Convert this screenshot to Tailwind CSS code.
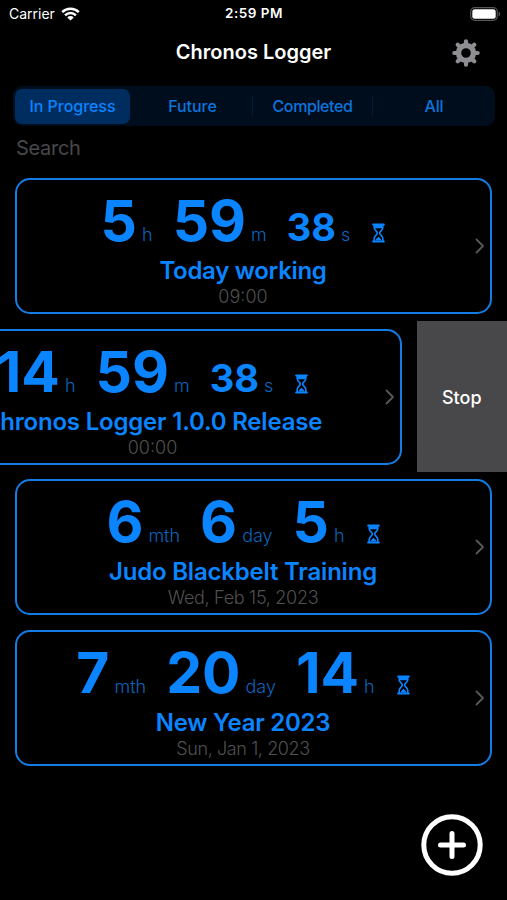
<!DOCTYPE html>
<html lang="en">
<head>
    <meta charset="UTF-8" />
    <meta name="viewport" content="width=device-width, initial-scale=1.0" />
    <script src="https://cdn.jsdelivr.net/npm/@tailwindcss/browser@4"></script>
    <title>Chronos Logger</title>
</head>
<body class="bg-black text-white font-['Inter',sans-serif]">
    <svg class="hidden">
        <symbol id="hourglass" viewBox="0 0 13 20">
            <path d="M1.200 1.500h10.600M1.200 18.500h10.600" stroke="currentColor" stroke-width="2.200" stroke-linecap="round" />
            <path d="M2.200 2v2.800c0 2.400 3.200 3.600 3.200 5.200s-3.200 2.800-3.200 5.200V18M10.800 2v2.800c0 2.400-3.200 3.600-3.200 5.200s3.200 2.800 3.200 5.200V18" fill="none" stroke="currentColor" stroke-width="1.600" />
            <path d="M2.200 2h8.600v3.200H2.200zM3.600 17.400c.3-1.600 1.600-2.200 2.900-3.600 1.300 1.400 2.600 2 2.900 3.600z" fill="currentColor" />
        </symbol>
        <symbol id="chevron" viewBox="0 0 10 16">
            <path d="M1.500 1.500L8 8l-6.500 6.500" fill="none" stroke="currentColor" stroke-width="1.800" stroke-linecap="round" stroke-linejoin="round" />
        </symbol>
    </svg>

    <div class="relative h-[900px] w-[507px] overflow-hidden">
        <!-- Status bar -->
        <div class="grid h-[27px] grid-cols-3 items-center pl-[9px] pr-[6px] text-[13.500px] leading-none">
            <div class="flex items-center gap-[6px] text-[14px]">
                <span>Carrier</span>
                <svg class="h-[14px] w-[19px]" viewBox="0 0 19 14" fill="none" stroke="white" stroke-width="2.500">
                    <path d="M1.200 5.200a11.800 11.800 0 0 1 16.600 0M4.100 8.300a7.600 7.600 0 0 1 10.800 0" />
                    <path d="M9.500 13.500L6.300 10.400a4.600 4.600 0 0 1 6.400 0z" fill="white" stroke="none" />
                </svg>
            </div>
            <div class="pr-[2px] text-center font-semibold tracking-[0.500px]">2:59 PM</div>
            <svg class="h-[14px] w-[31px] justify-self-end" viewBox="0 0 31 14">
                <rect x="0.700" y="0.700" width="26.600" height="12.600" rx="4" fill="none" stroke="#555" stroke-width="1.200" />
                <rect x="2.300" y="2.300" width="23.400" height="9.400" rx="2.500" fill="white" />
                <path d="M28.700 4.800c2 .7 2 3.700 0 4.400z" fill="#555" />
            </svg>
        </div>

        <!-- Navigation bar -->
        <div class="grid h-[51px] grid-cols-[54px_1fr_54px] items-center">
            <h1 class="col-start-2 pb-[1px] text-center text-[20px] font-semibold leading-none">Chronos Logger</h1>
            <svg class="ml-[-1px] h-[28px] w-[28px]" viewBox="-14 -14 28 28">
                <g fill="none" stroke="#8e8e93">
                    <circle r="7.500" stroke-width="5.400" />
                    <path d="M0-9V-11.700M0 9V11.700M9 0H11.700M-9 0H-11.700M6.400-6.400L8.300-8.300M-6.400-6.400L-8.300-8.300M6.400 6.400L8.300 8.300M-6.400 6.400L-8.300 8.300" stroke-width="4.200" stroke-linecap="round" />
                </g>
            </svg>
        </div>

        <!-- Filter tabs -->
        <div class="ml-[13px] mt-[8px] flex h-[40px] w-[482px] items-center rounded-[9px] bg-[#000d1c] p-[2px] text-[16px] font-medium leading-none tracking-[-0.200px] text-[#0c74dc]">
            <div class="flex h-[35px] w-[115px] items-center justify-center rounded-[7px] bg-[#002d60] tracking-[-0.050px] text-[#0a84ff]">In Progress</div>
            <div class="flex-1 pl-[3px] text-center tracking-[-0.050px]">Future</div>
            <div class="h-[20px] w-px bg-[#001b3c]"></div>
            <div class="w-[119px] text-center tracking-[-0.400px]">Completed</div>
            <div class="h-[20px] w-px bg-[#001b3c]"></div>
            <div class="w-[120px] pl-[2px] text-center">All</div>
        </div>
        <div class="mt-[10px] flex h-[24px] items-center pl-[16px] text-[20px] tracking-[-0.300px] text-[#48484a]">Search</div>

        <!-- Events -->
        <div class="mt-[10.500px] text-[#0a84ff]">
            <div class="flex h-[150.700px] items-center px-[15px]">
                <div class="flex h-[136px] w-[477px] items-center rounded-[15px] border-2 border-[#147ce5] pr-[5px]">
                    <div class="flex-1 pr-[6px] pt-[2px] text-center">
                        <div class="flex h-[72px] items-baseline justify-center leading-[72px]">
                            <span class="text-[57px] font-bold">5</span>
                            <span class="ml-[5px] text-[18px] font-light text-[#0b64bd]">h</span>
                            <span class="ml-[20px] text-[57px] font-bold">59</span>
                            <span class="ml-[5px] text-[18px] font-light text-[#0b64bd]">m</span>
                            <span class="ml-[20px] text-[38px] font-bold">38</span>
                            <span class="ml-[5px] text-[18px] font-light text-[#0b64bd]">s</span>
                            <svg class="ml-[22px] h-[20px] w-[13px] translate-y-[2px]"><use href="#hourglass" /></svg>
                        </div>
                        <div class="text-[24px] font-semibold leading-[28px] tracking-[-0.300px]">Today working</div>
                        <div class="text-[18px] font-light leading-[24px] text-[#505052]">09:00</div>
                    </div>
                    <svg class="h-[16px] w-[10px] text-[#58585a]"><use href="#chevron" /></svg>
                </div>
            </div>

            <!-- Swiped row with its action -->
            <div class="flex h-[150.700px] items-center justify-end">
                <div class="mr-[15px] flex h-[136px] w-[477px] shrink-0 items-center rounded-[15px] border-2 border-[#147ce5] pr-[5px]">
                    <div class="flex-1 pr-[6px] pt-[2px] text-center">
                        <div class="flex h-[72px] items-baseline justify-center leading-[72px]">
                            <span class="text-[57px] font-bold">14</span>
                            <span class="ml-[5px] text-[18px] font-light text-[#0b64bd]">h</span>
                            <span class="ml-[20px] text-[57px] font-bold">59</span>
                            <span class="ml-[5px] text-[18px] font-light text-[#0b64bd]">m</span>
                            <span class="ml-[20px] text-[38px] font-bold">38</span>
                            <span class="ml-[5px] text-[18px] font-light text-[#0b64bd]">s</span>
                            <svg class="ml-[22px] h-[20px] w-[13px] translate-y-[2px]"><use href="#hourglass" /></svg>
                        </div>
                        <div class="text-[24px] font-semibold leading-[28px] tracking-[-0.200px]">Chronos Logger 1.0.0 Release</div>
                        <div class="text-[18px] font-light leading-[24px] text-[#505052]">00:00</div>
                    </div>
                    <svg class="h-[16px] w-[10px] text-[#58585a]"><use href="#chevron" /></svg>
                </div>
                <button class="h-full w-[90.500px] shrink-0 bg-[#48484a] pt-[1px] text-[18px] font-medium text-white">Stop</button>
            </div>

            <div class="flex h-[150.700px] items-center px-[15px]">
                <div class="flex h-[136px] w-[477px] items-center rounded-[15px] border-2 border-[#147ce5] pr-[5px]">
                    <div class="flex-1 pr-[6px] pt-[2px] text-center">
                        <div class="flex h-[72px] items-baseline justify-center leading-[72px]">
                            <span class="text-[57px] font-bold">6</span>
                            <span class="ml-[5px] text-[18px] font-light text-[#0b64bd]">mth</span>
                            <span class="ml-[20px] text-[57px] font-bold">6</span>
                            <span class="ml-[5px] text-[18px] font-light text-[#0b64bd]">day</span>
                            <span class="ml-[20px] text-[57px] font-bold">5</span>
                            <span class="ml-[5px] text-[18px] font-light text-[#0b64bd]">h</span>
                            <svg class="ml-[22px] h-[20px] w-[13px] translate-y-[2px]"><use href="#hourglass" /></svg>
                        </div>
                        <div class="text-[24px] font-semibold leading-[28px] tracking-[-0.200px]">Judo Blackbelt Training</div>
                        <div class="text-[18px] font-light leading-[24px] tracking-[-0.300px] text-[#505052]">Wed, Feb 15, 2023</div>
                    </div>
                    <svg class="h-[16px] w-[10px] text-[#58585a]"><use href="#chevron" /></svg>
                </div>
            </div>

            <div class="flex h-[150.700px] items-center px-[15px]">
                <div class="flex h-[136px] w-[477px] items-center rounded-[15px] border-2 border-[#147ce5] pr-[5px]">
                    <div class="flex-1 pr-[6px] pt-[2px] text-center">
                        <div class="flex h-[72px] items-baseline justify-center leading-[72px]">
                            <span class="text-[57px] font-bold">7</span>
                            <span class="ml-[5px] text-[18px] font-light text-[#0b64bd]">mth</span>
                            <span class="ml-[20px] text-[57px] font-bold">20</span>
                            <span class="ml-[5px] text-[18px] font-light text-[#0b64bd]">day</span>
                            <span class="ml-[20px] text-[57px] font-bold">14</span>
                            <span class="ml-[5px] text-[18px] font-light text-[#0b64bd]">h</span>
                            <svg class="ml-[22px] h-[20px] w-[13px] translate-y-[2px]"><use href="#hourglass" /></svg>
                        </div>
                        <div class="text-[24px] font-semibold leading-[28px] tracking-[-0.250px]">New Year 2023</div>
                        <div class="text-[18px] font-light leading-[24px] tracking-[-0.400px] text-[#505052]">Sun, Jan 1, 2023</div>
                    </div>
                    <svg class="h-[16px] w-[10px] text-[#58585a]"><use href="#chevron" /></svg>
                </div>
            </div>
        </div>

        <!-- Add button -->
        <button class="absolute bottom-[24px] right-[24px] h-[62px] w-[62px]">
            <svg viewBox="0 0 62 62" fill="none" stroke="white" stroke-width="5" stroke-linecap="round">
                <circle cx="31" cy="31" r="28.200" />
                <path d="M31 19.500v23M19.500 31h23" />
            </svg>
        </button>
    </div>
</body>
</html>
